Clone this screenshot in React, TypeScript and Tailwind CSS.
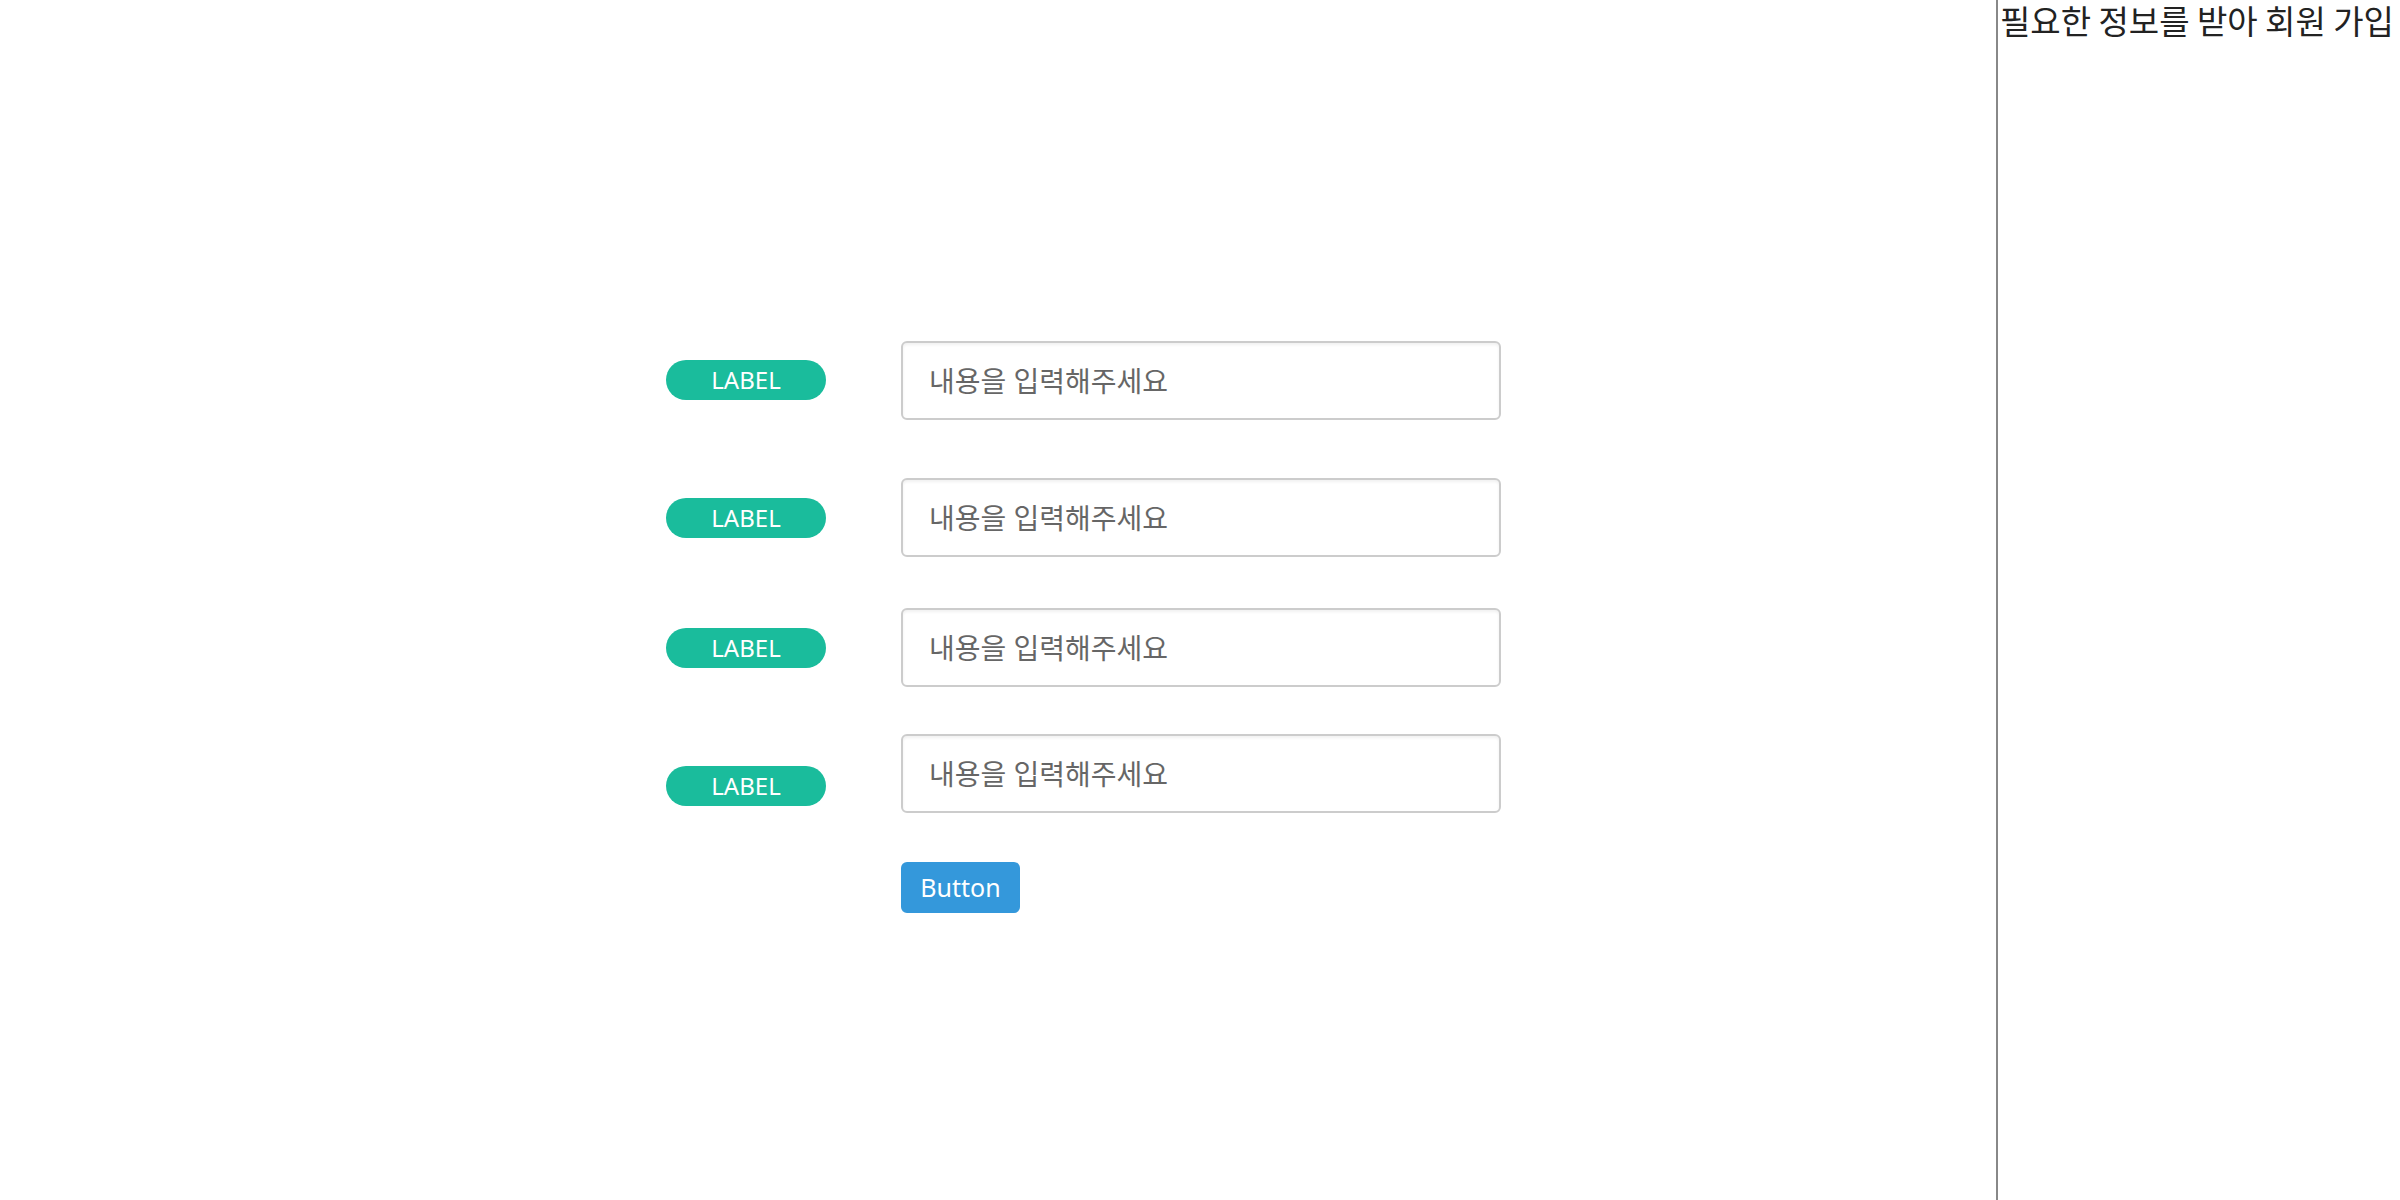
const rows = [
  { rowMt: "mt-0", labelMt: "mt-[19px]" },
  { rowMt: "mt-[58px]", labelMt: "mt-[20px]" },
  { rowMt: "mt-[51px]", labelMt: "mt-[20px]" },
  { rowMt: "mt-[47px]", labelMt: "mt-[32px]" },
];

function Field({ rowMt, labelMt }: { rowMt: string; labelMt: string }) {
  return (
    <div className={`flex items-start gap-[75px] ${rowMt}`}>
      <span
        className={`w-[160px] h-[40px] rounded-full bg-[#1abc9c] text-white text-[24px] leading-[40px] text-center ${labelMt}`}
      >
        LABEL
      </span>
      <input
        type="text"
        placeholder="내용을 입력해주세요"
        className="w-[600px] h-[79px] px-[26px] rounded-[6px] border-2 border-[#cccccc] bg-white text-[28px] text-[#555] placeholder:text-[#666] shadow-[inset_0_2px_3px_rgba(0,0,0,0.06)] outline-none"
      />
    </div>
  );
}

export default function App() {
  return (
    <div className="flex min-h-[1200px] w-full bg-white font-['Noto_Sans','Noto_Sans_CJK_KR',sans-serif]">
      <main className="flex-1 pl-[666px] pt-[341px]">
        {rows.map((r, i) => (
          <Field key={i} rowMt={r.rowMt} labelMt={r.labelMt} />
        ))}
        <div className="mt-[49px] pl-[235px]">
          <button className="w-[119px] h-[51px] rounded-[6px] bg-[#3498db] text-white text-[25px] leading-none">
            Button
          </button>
        </div>
      </main>
      <aside className="w-[404px] border-l-2 border-[#888888] pl-[2px]">
        <h1 className="text-[33px] leading-[40px] text-[#222] font-['Noto_Sans_CJK_KR',sans-serif] whitespace-nowrap">
          필요한 정보를 받아 회원 가입
        </h1>
      </aside>
    </div>
  );
}
